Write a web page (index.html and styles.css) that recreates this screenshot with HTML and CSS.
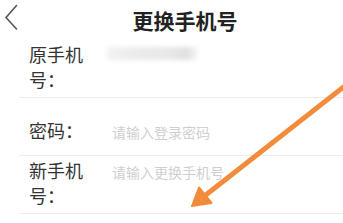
FILE: index.html
```html
<!DOCTYPE html>
<html lang="zh-CN">
<head>
    <meta charset="UTF-8">
    <meta name="viewport" content="width=device-width, initial-scale=1.0">
    <title>更换手机号</title>
    <link rel="stylesheet" href="styles.css">
</head>
<body>
    <div class="page">
        <header class="topbar">
            <svg class="back" width="14" height="40" viewBox="0 0 14 40">
                <polyline points="12.5,5.5 2,17.5 12.5,29" fill="none" stroke="#555" stroke-width="1.6" stroke-linecap="round" stroke-linejoin="round"/>
            </svg>
            <h1 class="title">更换手机号</h1>
        </header>

        <div class="form">
            <div class="row">
                <div class="label">原手机号：</div>
                <div class="value"><span class="masked"></span></div>
            </div>
            <div class="row row-single">
                <div class="label">密码：</div>
                <div class="placeholder">请输入登录密码</div>
            </div>
            <div class="row">
                <div class="label">新手机号：</div>
                <div class="placeholder">请输入更换手机号</div>
            </div>
        </div>

        <!-- 标注箭头 -->
        <svg class="arrow" width="343" height="223" viewBox="0 0 343 223">
            <line x1="346" y1="85" x2="202" y2="198" stroke="#f28b3b" stroke-width="5" stroke-linecap="round"/>
            <polygon points="192,206 199,187.5 211.5,203" fill="#f28b3b" stroke="#f28b3b" stroke-width="2" stroke-linejoin="round"/>
        </svg>
    </div>
</body>
</html>
```

FILE: styles.css
```css
* {
    margin: 0;
    padding: 0;
    box-sizing: border-box;
}

body {
    background: #fff;
    font-family: "Noto Sans CJK SC", "Noto Sans", sans-serif;
    color: #222;
}

.page {
    position: relative;
    width: 343px;
    height: 223px;
    overflow: hidden;
}

/* 顶部栏 */
.topbar {
    display: flex;
    align-items: center;
    height: 40px;
    padding-left: 4px;
}

.back {
    flex: none;
}

.title {
    flex: 1;
    text-align: center;
    padding-left: 9px;
    font-size: 21px;
    font-weight: 700;
    line-height: 40px;
    color: #222;
}

/* 表单 */
.form {
    margin-left: 19px;
}

.row {
    display: flex;
    align-items: flex-start;
    padding: 2px 0 5px 10px;
    border-bottom: 1px solid #ececec;
}

.row-single {
    padding-top: 20px;
    padding-bottom: 10px;
}

.label {
    width: 62px;
    flex: none;
    font-size: 18px;
    line-height: 25px;
    color: #333;
}

.value {
    margin-left: 16px;
    padding-top: 5px;
}

.masked {
    display: block;
    width: 90px;
    height: 13px;
    background: linear-gradient(90deg, #f2f2f2 0%, #ebebeb 30%, #e8e8e8 70%, #e0e0e0 88%, #f4f4f4 100%);
    filter: blur(2px);
}

.placeholder {
    margin-left: 21px;
    margin-top: 2px;
    font-size: 14px;
    line-height: 25px;
    color: #cfcfcf;
}

.arrow {
    position: absolute;
    left: 0;
    top: 0;
    pointer-events: none;
}
```
